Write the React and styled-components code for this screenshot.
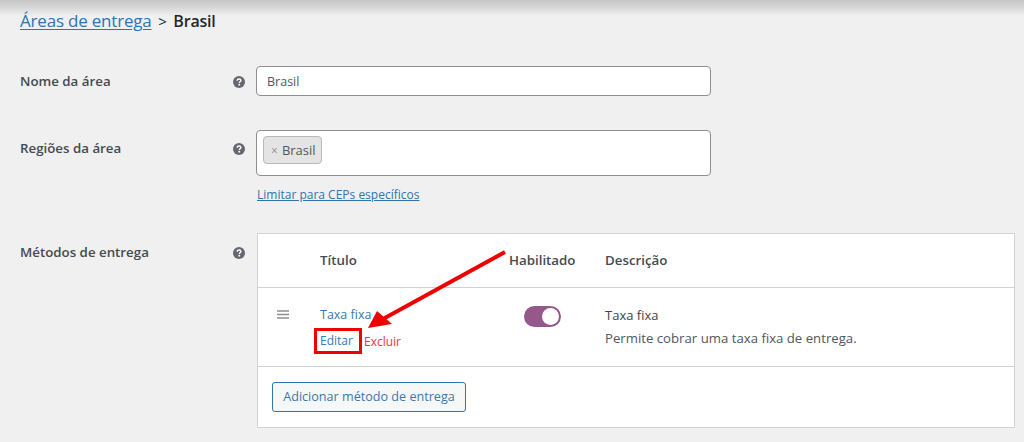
import React from 'react'
import styled, { createGlobalStyle } from 'styled-components'

const GlobalStyle = createGlobalStyle`
  html, body {
    margin: 0;
    padding: 0;
    height: 442px;
    overflow: hidden;
    background: #f0f0f1;
    font-family: "Open Sans", "Noto Sans", "Liberation Sans", sans-serif;
    color: #3c434a;
  }
`
const Page = styled.div`
  position: relative;
  width: 1024px;
  height: 442px;
  overflow: hidden;
  box-sizing: border-box;
  padding: 10px 9px 0 20px;
`
const TopShade = styled.div`
  position: absolute;
  left: 0;
  right: 0;
  top: 0;
  height: 16px;
  background: linear-gradient(#c4c5c6, #d4d4d5 40%, #f0f0f1);
`
const Heading = styled.h2`
  position: relative;
  margin: 0 0 35px;
  height: 21px;
  font-size: 16px;
  line-height: 21px;
  font-weight: 600;
  color: #23282d;
  letter-spacing: -0.2px;
`
const HeadingLink = styled.a`
  font-size: 17px;
  color: #2f74ad;
  font-weight: 400;
  text-decoration: underline;
  text-underline-offset: 2px;
`
const Separator = styled.span`
  font-weight: 400;
  margin: 0 3px;
  font-size: 15px;
`
const Row = styled.div`
  display: grid;
  grid-template-columns: 213px 23px 1fr;
  margin-bottom: ${p => p.$gap}px;
`
const Label = styled.div`
  font-size: 13.3px;
  font-weight: 600;
  color: #444a50;
  line-height: 18px;
  padding-top: ${p => p.$top}px;
`
const Help = styled.div`
  padding-top: ${p => p.$top}px;
  height: 12px;
  svg { display: block; }
`
const TextBox = styled.div`
  box-sizing: border-box;
  width: 455px;
  height: 30px;
  background: #fff;
  border: 1px solid #8c8f94;
  border-radius: 4px;
  padding: 0 10px;
  font-size: 12.5px;
  line-height: 29px;
  color: #50575e;
`
const TagBox = styled.div`
  box-sizing: border-box;
  width: 455px;
  height: 46px;
  background: #fff;
  border: 1px solid #8c8f94;
  border-radius: 4px;
  padding: 5px 6px;
`
const Tag = styled.span`
  display: inline-flex;
  align-items: center;
  box-sizing: border-box;
  height: 28px;
  padding: 0 5px 0 7px;
  gap: 4px;
  background: #e4e4e4;
  border: 1px solid #b8b8b8;
  border-radius: 4px;
  font-size: 13px;
  color: #50575e;
  span { color: #8c8f94; font-size: 12px; }
`
const SmallLink = styled.a`
  display: block;
  margin: 11px 0 0 1px;
  font-size: 12px;
  line-height: 16px;
  color: #2f74ad;
  text-decoration: underline;
`
const Card = styled.div`
  box-sizing: border-box;
  width: 758px;
  height: 195px;
  margin-left: 1px;
  background: #fff;
  border: 1px solid #d3d3d4;
  display: grid;
  grid-template-rows: 54px 79px 1fr;
`
const TableRow = styled.div`
  display: grid;
  grid-template-columns: 62px 189px 96px 1fr;
  border-bottom: 1px solid #d0d1d2;
  box-sizing: border-box;
`
const HeadCell = styled.div`
  font-size: 13.3px;
  font-weight: 600;
  color: #444a50;
  line-height: 52px;
  grid-column: ${p => p.$col};
`
const Handle = styled.div`
  padding: 22px 0 0 19px;
  svg { display: block; }
`
const TitleCell = styled.div`
  padding-top: 18px;
`
const TitleLink = styled.a`
  display: block;
  font-size: 12.5px;
  line-height: 18px;
  color: #3a77ad;
`
const Actions = styled.div`
  display: flex;
  align-items: center;
  margin: 4px 0 0 -6px;
  font-size: 12px;
`
const EditMark = styled.a`
  box-sizing: border-box;
  width: 48px;
  height: 26px;
  border: 3px solid #f00000;
  padding-left: 3px;
  line-height: 20px;
  color: #3a77ad;
`
const DeleteLink = styled.a`
  margin-left: 2px;
  color: #ff3030;
`
const ToggleCell = styled.div`
  padding: 18px 0 0 15px;
`
const Toggle = styled.div`
  box-sizing: border-box;
  width: 37px;
  height: 21px;
  border-radius: 11px;
  background: #96588a;
  display: flex;
  justify-content: flex-end;
  padding: 2px;
  div {
    width: 17px;
    height: 17px;
    border-radius: 50%;
    background: #fff;
  }
`
const DescCell = styled.div`
  padding-top: 18px;
  font-size: 13.2px;
  line-height: 23px;
  color: #50575e;
  strong { display: block; font-size: 13px; font-weight: 500; line-height: 18px; margin-bottom: 3px; color: #3c434a; }
`
const Footer = styled.div`
  padding: 15px 0 0 14px;
`
const AddButton = styled.a`
  display: inline-block;
  box-sizing: border-box;
  width: 194px;
  height: 30px;
  line-height: 28px;
  text-align: center;
  background: #f6f7f7;
  border: 1px solid #2f74ad;
  border-radius: 3px;
  font-size: 12.6px;
  color: #3a77ad;
`
const Arrow = styled.svg`
  position: absolute;
  left: 0;
  top: 0;
  pointer-events: none;
`

const HelpIcon = () => (
  <svg width="12" height="12" viewBox="0 0 12 12">
    <circle cx="6" cy="6" r="6" fill="#646970" />
    <path d="M4.1 4.7C4.2 3.5 5 3 6 3c1.1 0 1.9.6 1.9 1.5 0 1.3-1.6 1.3-1.6 2.5" fill="none" stroke="#fff" strokeWidth="1.4" />
    <rect x="5.4" y="7.9" width="1.7" height="1.6" fill="#fff" />
  </svg>
)

function App() {
  return (
    <Page>
      <GlobalStyle />
      <TopShade />
      <Heading><HeadingLink>Áreas de entrega</HeadingLink><Separator> &gt; </Separator>Brasil</Heading>
      <Row $gap={34}>
        <Label $top={6}>Nome da área</Label>
        <Help $top={10}><HelpIcon /></Help>
        <TextBox>Brasil</TextBox>
      </Row>
      <Row $gap={30}>
        <Label $top={9}>Regiões da área</Label>
        <Help $top={13}><HelpIcon /></Help>
        <div>
          <TagBox><Tag><span>×</span>Brasil</Tag></TagBox>
          <SmallLink>Limitar para CEPs específicos</SmallLink>
        </div>
      </Row>
      <Row $gap={0}>
        <Label $top={10}>Métodos de entrega</Label>
        <Help $top={14}><HelpIcon /></Help>
        <Card>
          <TableRow>
            <HeadCell $col={2}>Título</HeadCell>
            <HeadCell $col={3}>Habilitado</HeadCell>
            <HeadCell $col={4}>Descrição</HeadCell>
          </TableRow>
          <TableRow>
            <Handle>
              <svg width="12" height="9" viewBox="0 0 12 9">
                <path d="M0 1h12M0 4.5h12M0 8h12" stroke="#8c8f94" strokeWidth="1.4" />
              </svg>
            </Handle>
            <TitleCell>
              <TitleLink>Taxa fixa</TitleLink>
              <Actions>
                <EditMark>Editar</EditMark>
                <DeleteLink>Excluir</DeleteLink>
              </Actions>
            </TitleCell>
            <ToggleCell><Toggle><div /></Toggle></ToggleCell>
            <DescCell>
              <strong>Taxa fixa</strong>
              Permite cobrar uma taxa fixa de entrega.
            </DescCell>
          </TableRow>
          <Footer><AddButton>Adicionar método de entrega</AddButton></Footer>
        </Card>
      </Row>
      <Arrow width="1024" height="442" viewBox="0 0 1024 442">
        <path d="M505 252L383 319" stroke="#f00000" strokeWidth="4" />
        <path d="M368 328L377 311L392 324Z" fill="#f00000" />
      </Arrow>
    </Page>
  )
}

export default App
